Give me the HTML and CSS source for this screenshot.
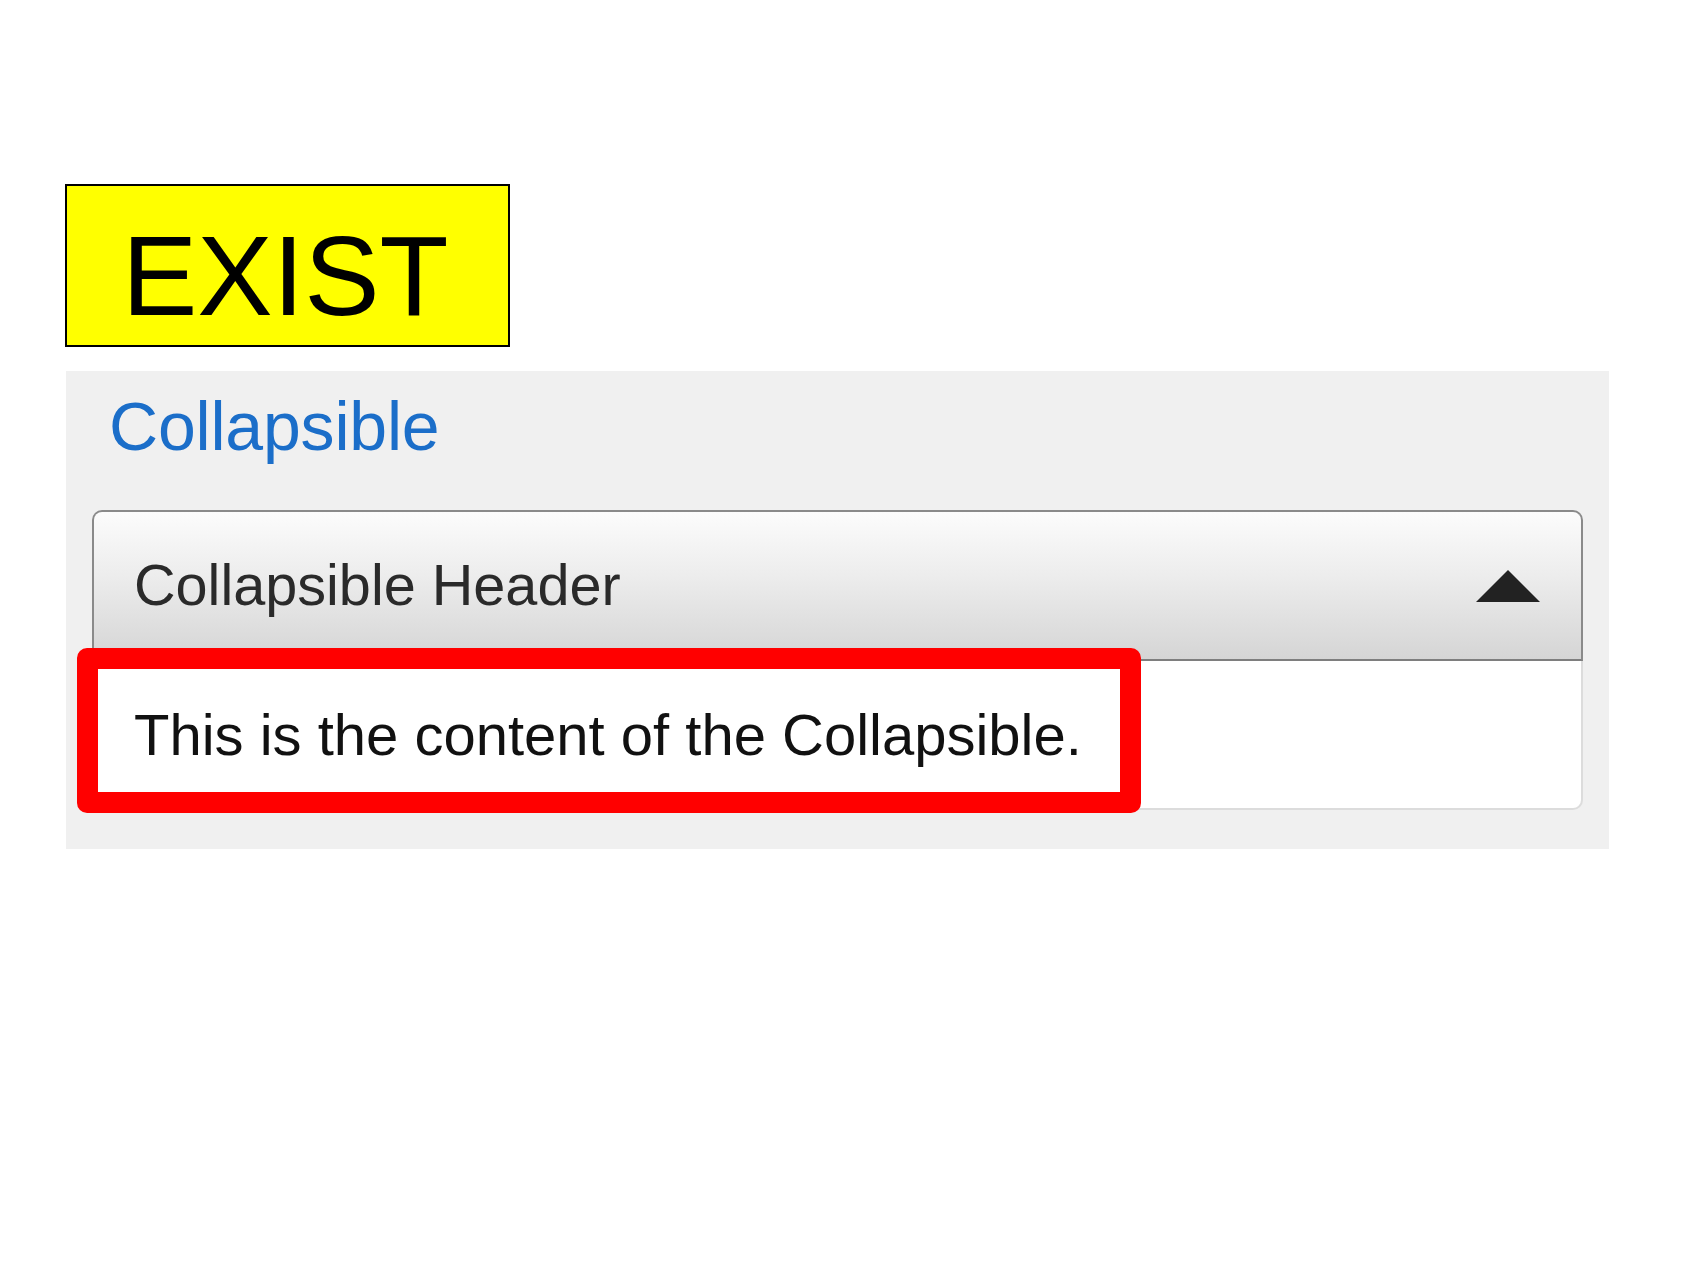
FILE: index.html
```html
<!DOCTYPE html>
<html>
<head>
<meta charset="utf-8">
<title>Collapsible</title>
<link rel="stylesheet" href="styles.css">
</head>
<body>
  <div class="badge">EXIST</div>
  <section class="panel">
    <h2 class="title">Collapsible</h2>
    <div class="collapsible">
      <div class="coll-header">
        <span class="coll-label">Collapsible Header</span>
        <svg class="arrow" width="64" height="32" viewBox="0 0 64 32"><polygon points="0,32 32,0 64,32" fill="#222"/></svg>
      </div>
      <div class="coll-content">
        <span class="coll-text">This is the content of the Collapsible.</span>
      </div>
      <div class="highlight"></div>
    </div>
  </section>
</body>
</html>
```
FILE: styles.css
```css
html, body {
  margin: 0;
  padding: 0;
  background: #ffffff;
}
body {
  font-family: "Liberation Sans", Arial, sans-serif;
}
.badge {
  box-sizing: border-box;
  width: 445px;
  height: 163px;
  margin: 184px 0 0 65px;
  padding: 34px 0 0 55px;
  background: #ffff00;
  border: 2px solid #000;
  font-size: 113px;
  line-height: 1;
  color: #000;
}
.panel {
  box-sizing: border-box;
  width: 1543px;
  height: 478px;
  margin: 24px 0 0 66px;
  padding: 21px 26px 38px 26px;
  background: #f0f0f0;
  display: flex;
  flex-direction: column;
}
.title {
  margin: 0 0 50px 0;
  padding-left: 17px;
  height: 68px;
  font-size: 68px;
  line-height: 68px;
  font-weight: normal;
  letter-spacing: -0.2px;
  color: #1b6ec9;
}
.collapsible {
  position: relative;
  display: flex;
  flex-direction: column;
}
.coll-header {
  box-sizing: border-box;
  height: 151px;
  display: flex;
  align-items: center;
  justify-content: space-between;
  padding: 0 41px 0 40px;
  border: 2px solid #8a8a8a;
  border-bottom-color: #7e7e7e;
  border-radius: 10px 10px 0 0;
  background: linear-gradient(to bottom, #fcfcfc 0%, #ececec 45%, #d5d5d5 100%);
}
.coll-label {
  font-size: 57.6px;
  line-height: 1;
  color: #2a2a2a;
}
.arrow {
  display: block;
}
.coll-content {
  box-sizing: border-box;
  height: 149px;
  display: flex;
  align-items: center;
  padding: 0 40px;
  background: #ffffff;
  border: 2px solid #dcdcdc;
  border-top: none;
  border-radius: 0 0 10px 10px;
}
.coll-text {
  font-size: 58px;
  line-height: 1;
  color: #111;
}
.highlight {
  position: absolute;
  left: -15px;
  top: 138px;
  width: 1064px;
  height: 165px;
  box-sizing: border-box;
  border: 21px solid #ff0000;
  border-radius: 10px;
}
```
